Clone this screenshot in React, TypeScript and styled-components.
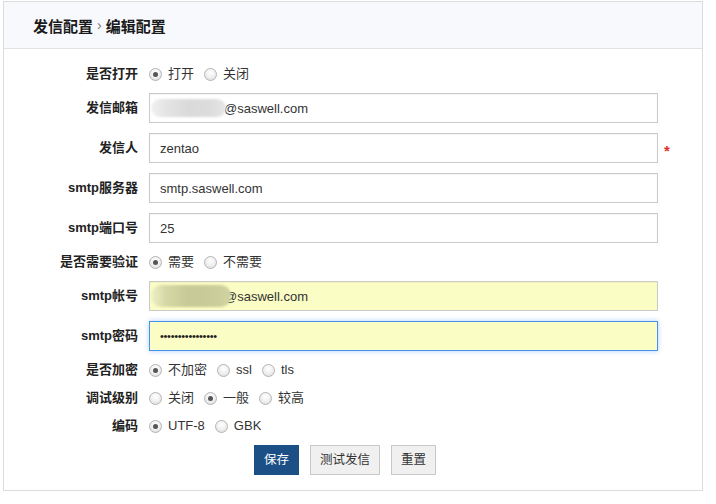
import React from 'react';
import styled, { createGlobalStyle } from 'styled-components';

const GlobalStyle = createGlobalStyle`
    body{
        margin:0;
        background:#fff;
        font-family:"Liberation Sans","Noto Sans CJK SC",sans-serif;
        color:#333;
    }
`
const Panel = styled.div`
    box-sizing:border-box;
    width:700px;
    margin:1px 0 0 3px;
    border:1px solid #dcdcdc;
    background:#fff;
`
const Header = styled.div`
    height:46px;
    display:flex;
    align-items:center;
    padding-left:29px;
    background:#f8f9fd;
    border-bottom:1px solid #e2e2e2;
    font-size:15px;
    font-weight:700;
    color:#1a1a1a;
`
const Crumb = styled.span`
    color:#777;
    font-weight:400;
    font-size:14px;
    margin:0 4px 0 4px;
`
const Form = styled.div`
    display:grid;
    grid-template-columns:134px 1fr;
    column-gap:11px;
    row-gap:10px;
    padding:16px 0 15px;
    align-items:center;
`
const Label = styled.div`
    text-align:right;
    font-size:13px;
    line-height:18px;
    height:18px;
    font-weight:700;
    color:#222;
    white-space:nowrap;
`
const Control = styled.div`
    display:flex;
    align-items:center;
`
const RadioGroup = styled.div`
    height:18px;
    display:flex;
    align-items:center;
    gap:10px;
`
const RadioItem = styled.label`
    display:flex;
    align-items:center;
    gap:6px;
    font-size:13px;
    line-height:18px;
    height:18px;
    color:#333;
`
interface DotProps{
    checked:boolean
}
const Dot = styled.span<DotProps>`
    box-sizing:border-box;
    width:13px;
    height:13px;
    border-radius:50%;
    border:1px solid #b4b4b4;
    background:radial-gradient(circle at 50% 35%, #ffffff 0%, #f2f2f2 45%, #dadada 100%);
    display:flex;
    align-items:center;
    justify-content:center;
    &::after{
        content:'';
        width:5px;
        height:5px;
        border-radius:50%;
        background:#555;
        display:${props=>props.checked ? 'block' : 'none'};
    }
`
interface FieldProps{
    filled?:boolean
    focused?:boolean
}
const Field = styled.div<FieldProps>`
    box-sizing:border-box;
    width:509px;
    height:30px;
    display:flex;
    align-items:center;
    padding:0 10px;
    border:1px solid ${props=>props.focused ? '#4a90f0' : '#cacaca'};
    box-shadow:${props=>props.focused ? '0 0 5px rgba(80,150,255,0.45)' : 'inset 0 1px 1px rgba(0,0,0,0.04)'};
    background:${props=>props.filled ? '#fafdc4' : '#fff'};
    font-size:13px;
    color:#333;
    white-space:nowrap;
`
interface MaskProps{
    tone:'gray' | 'yellow'
    size:number
    overlap:number
}
const Mask = styled.span<MaskProps>`
    position:relative;
    z-index:1;
    display:block;
    width:${props=>props.size}px;
    height:${props=>props.tone === 'yellow' ? 22 : 18}px;
    margin-left:-9px;
    margin-right:-${props=>props.overlap}px;
    border-radius:10px;
    filter:blur(1.2px);
    background:${props=>props.tone === 'yellow'
        ? 'linear-gradient(90deg, #eef1c6 0%, #d6d9a6 18%, #c8cb96 45%, #c9cc98 75%, #d2d5a2 100%)'
        : 'linear-gradient(90deg, #f1f1f1 0%, #e4e4e4 20%, #dadada 50%, #dcdcdc 78%, #e6e6e6 100%)'};
`
const Secret = styled.span`
    font-size:11px;
    letter-spacing:-0.3px;
    color:#222;
`
const Required = styled.span`
    color:#e0302c;
    font-size:15px;
    font-weight:700;
    margin-left:6px;
    line-height:1;
    padding-top:4px;
`
const ButtonBar = styled.div`
    display:flex;
    gap:11px;
    padding-left:105px;
`
interface ButtonProps{
    primary?:boolean
}
const Button = styled.button<ButtonProps>`
    box-sizing:border-box;
    height:30px;
    padding:0 9px;
    font-family:"Liberation Sans","Noto Sans CJK SC",sans-serif;
    font-size:12.5px;
    line-height:18px;
    border:1px solid ${props=>props.primary ? '#1b4f86' : '#c8c8c8'};
    background:${props=>props.primary ? '#1b4f86' : '#f0f0f0'};
    color:${props=>props.primary ? '#fff' : '#333'};
    border-radius:0;
    cursor:pointer;
`

const Radios = ({options, value}:{options:string[], value:string}) => {
    return(
        <RadioGroup>
            {options.map(o=>(
                <RadioItem key={o}>
                    <Dot checked={o === value} />
                    {o}
                </RadioItem>
            ))}
        </RadioGroup>
    )
}

const App = () => {
    return(
        <>
            <GlobalStyle />
            <Panel>
                <Header>
                    发信配置<Crumb>›</Crumb>编辑配置
                </Header>
                <Form>
                    <Label>是否打开</Label>
                    <Control><Radios options={['打开','关闭']} value='打开' /></Control>

                    <Label>发信邮箱</Label>
                    <Control>
                        <Field><Mask tone='gray' size={75} overlap={2} />@saswell.com</Field>
                    </Control>

                    <Label>发信人</Label>
                    <Control>
                        <Field>zentao</Field>
                        <Required>*</Required>
                    </Control>

                    <Label>smtp服务器</Label>
                    <Control><Field>smtp.saswell.com</Field></Control>

                    <Label>smtp端口号</Label>
                    <Control><Field>25</Field></Control>

                    <Label>是否需要验证</Label>
                    <Control><Radios options={['需要','不需要']} value='需要' /></Control>

                    <Label>smtp帐号</Label>
                    <Control>
                        <Field filled><Mask tone='yellow' size={80} overlap={7} />@saswell.com</Field>
                    </Control>

                    <Label>smtp密码</Label>
                    <Control>
                        <Field filled focused><Secret>••••••••••••••••</Secret></Field>
                    </Control>

                    <Label>是否加密</Label>
                    <Control><Radios options={['不加密','ssl','tls']} value='不加密' /></Control>

                    <Label>调试级别</Label>
                    <Control><Radios options={['关闭','一般','较高']} value='一般' /></Control>

                    <Label>编码</Label>
                    <Control><Radios options={['UTF-8','GBK']} value='UTF-8' /></Control>

                    <div />
                    <ButtonBar>
                        <Button primary>保存</Button>
                        <Button>测试发信</Button>
                        <Button>重置</Button>
                    </ButtonBar>
                </Form>
            </Panel>
        </>
    )
}

export default App;
